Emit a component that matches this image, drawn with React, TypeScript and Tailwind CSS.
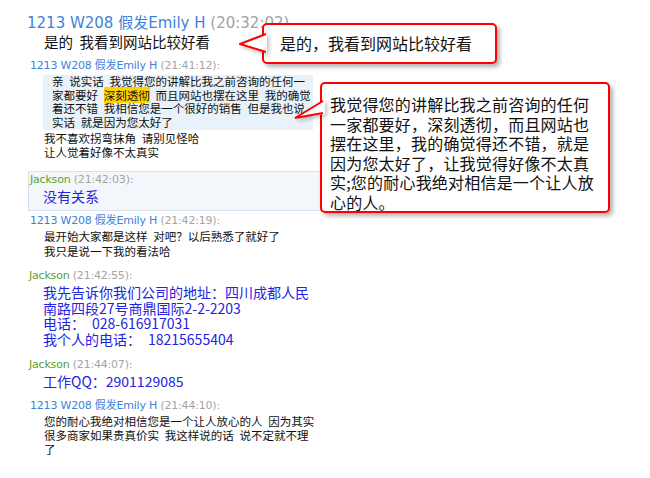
import React from 'react'

const HEAD = "font-['DejaVu_Sans','Noto_Sans_CJK_SC',sans-serif] text-[11px] leading-[14px] tracking-[-0.2px]"

function EmilyHeader({ time, className = '' }: { time: string; className?: string }) {
  return (
    <div className={`${HEAD} pl-[30px] text-[#3c82dc] ${className}`}>
      1213 W208 假发Emily H <span className="text-[#a3a3a3]">({time}):</span>
    </div>
  )
}

function JacksonHeader({ time, className = '' }: { time: string; className?: string }) {
  return (
    <div className={`${HEAD} text-[#58a12a] ${className}`}>
      Jackson <span className="text-[#a3a3a3]">({time}):</span>
    </div>
  )
}

function Callout({ box, tail, children }: { box: string; tail: { w: number; h: number; top: number; pts: string; line: string }; children: React.ReactNode }) {
  return (
    <div className={`absolute ${box} rounded-[5px] border-2 border-[#ff0000] bg-white shadow-[3px_3px_4px_rgba(0,0,0,0.3)]`}>
      <svg
        className="absolute drop-shadow-[2px_2px_2px_rgba(0,0,0,0.25)]"
        style={{ left: -tail.w, top: tail.top }}
        width={tail.w + 3}
        height={tail.h}
        viewBox={`0 0 ${tail.w + 3} ${tail.h}`}
      >
        <polygon points={tail.pts} fill="white" />
        <polyline points={tail.line} fill="none" stroke="#ff0000" strokeWidth="2" strokeLinejoin="miter" />
      </svg>
      {children}
    </div>
  )
}

export default function App() {
  return (
    <div className="relative w-[650px] h-[478px] overflow-hidden bg-white text-[#111] font-['Noto_Sans_CJK_SC',sans-serif]">
      <div className="pt-[14px]">
        <div className="pl-[27px] font-['DejaVu_Sans','Noto_Sans_CJK_SC',sans-serif] text-[15px] leading-[18px] text-[#3c82dc]">
          1213 W208 假发Emily H <span className="text-[#a3a3a3]">(20:32:02)</span>
        </div>
        <div className="pl-[44px] text-[14.5px] leading-[20px] whitespace-pre">是的  我看到网站比较好看</div>

        <EmilyHeader time="21:41:12" className="mt-[7px]" />
        <div className="mt-[2px] ml-[43px] w-[270px] bg-[#e9f1f9] pl-[9px] pb-[1px] text-[11.5px] leading-[13.5px] whitespace-pre">
          <div>亲{'\u2002'}说实话{'\u2002'}我觉得您的讲解比我之前咨询的任何一</div>
          <div>
            家都要好{'\u2002'}<span className="bg-[#ffd200]">深刻透彻</span>{'\u2002'}而且网站也摆在这里{'\u2002'}我的确觉
          </div>
          <div>着还不错{'\u2002'}我相信您是一个很好的销售{'\u2002'}但是我也说</div>
          <div>实话{'\u2002'}就是因为您太好了</div>
        </div>
        <div className="mt-[2px] pl-[44px] text-[11.5px] leading-[13.5px] whitespace-pre">
          <div>我不喜欢拐弯抹角{'\u2002'}请别见怪哈</div>
          <div>让人觉着好像不太真实</div>
        </div>

        <div className="mt-[12px] ml-[28px] w-[320px] border border-[#d9e3ec] bg-[#f3f7fb] pt-[1px] pb-[6px]">
          <JacksonHeader time="21:42:03" className="pl-[1px]" />
          <div className="mt-[1px] pl-[14px] text-[14px] leading-[16px] text-[#2323e0]">没有关系</div>
        </div>

        <EmilyHeader time="21:42:19" className="mt-[3px]" />
        <div className="mt-[1px] pl-[44px] text-[11.5px] leading-[15px] whitespace-pre">
          <div>最开始大家都是这样{'\u2002'}对吧？以后熟悉了就好了</div>
          <div>我只是说一下我的看法哈</div>
        </div>

        <JacksonHeader time="21:42:55" className="mt-[10px] pl-[29px]" />
        <div className="mt-[2px] pl-[43px] text-[14px] leading-[15.5px] text-[#2323e0] whitespace-pre">
          <div>我先告诉你我们公司的地址：四川成都人民</div>
          <div>南路四段27号商鼎国际2-2-2203</div>
          <div>电话：{'\u2002'}028-616917031</div>
          <div>我个人的电话：{'\u2002'}18215655404</div>
        </div>

        <JacksonHeader time="21:44:07" className="mt-[11px] pl-[29px]" />
        <div className="mt-[1px] pl-[43px] text-[14px] leading-[16px] text-[#2323e0]">工作QQ：2901129085</div>

        <EmilyHeader time="21:44:10" className="mt-[10px]" />
        <div className="mt-[1px] pl-[44px] text-[11.5px] leading-[14px] whitespace-pre">
          <div>您的耐心我绝对相信您是一个让人放心的人{'\u2002'}因为其实</div>
          <div>很多商家如果贵真价实{'\u2002'}我这样说的话{'\u2002'}说不定就不理</div>
          <div>了</div>
        </div>
      </div>

      <Callout
        box="left-[262px] top-[23px] w-[235px] h-[41px]"
        tail={{ w: 25, h: 22, top: 8, pts: '1,11 28,0 28,20', line: '27,1 1,11 27,19' }}
      >
        <div className="pl-[16px] text-[16px] leading-[37px]">是的，我看到网站比较好看</div>
      </Callout>

      <Callout
        box="left-[320px] top-[82px] w-[290px] h-[131px]"
        tail={{ w: 28, h: 22, top: 14, pts: '1,20 31,2 31,16', line: '29,3 1,20 29,15' }}
      >
        <div className="pl-[8px] pt-[11px] text-[16px] leading-[19.5px] tracking-[0.2px] whitespace-pre">
          <div>我觉得您的讲解比我之前咨询的任何</div>
          <div>一家都要好，深刻透彻，而且网站也</div>
          <div>摆在这里，我的确觉得还不错，就是</div>
          <div>因为您太好了，让我觉得好像不太真</div>
          <div>实;您的耐心我绝对相信是一个让人放</div>
          <div>心的人。</div>
        </div>
      </Callout>
    </div>
  )
}
